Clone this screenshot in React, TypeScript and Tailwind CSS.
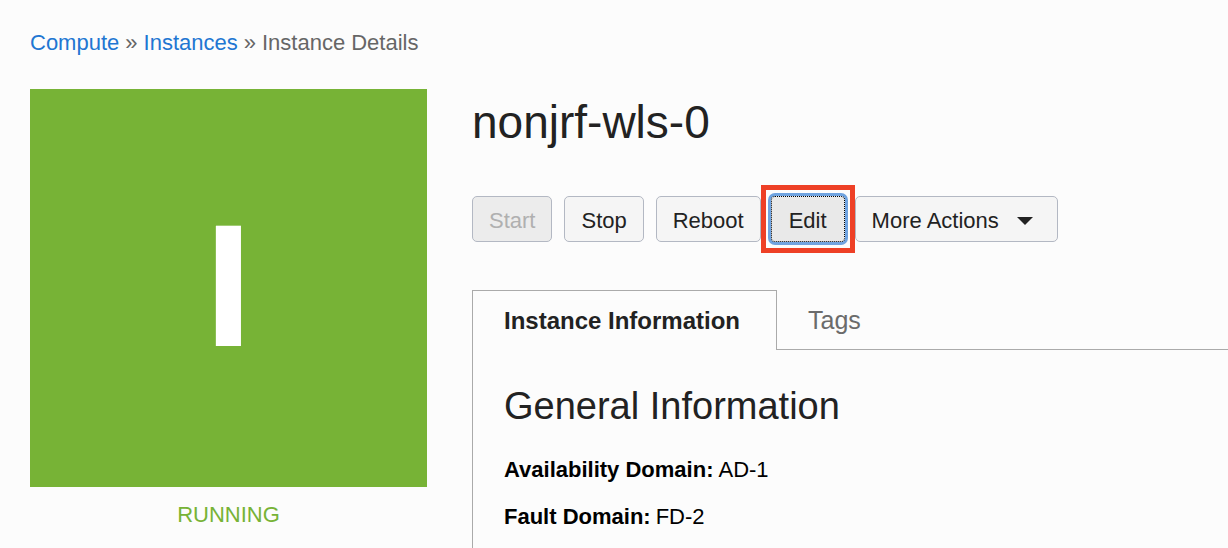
import type { ReactNode } from "react";

const buttonBase = "h-[46px] rounded-[5px] border border-[#b3b8c3] pl-4 pt-[3px] text-[22px] leading-6";

function ActionButton({ children, disabled = false }: { children: ReactNode; disabled?: boolean }) {
  return (
    <button
      type="button"
      disabled={disabled}
      className={`${buttonBase} pr-4 ${disabled ? "bg-[#ececec] text-[#b0b0b0]" : "bg-[#f5f5f5] text-[#222222]"}`}
    >
      {children}
    </button>
  );
}

function Field({ label, value }: { label: string; value: string }) {
  return (
    <div className="flex gap-[5px]">
      <dt className="font-bold">{label}:</dt>
      <dd>{value}</dd>
    </div>
  );
}

export default function App() {
  return (
    <div className="flex min-h-screen flex-col bg-[#fcfcfc] pl-[30px] pt-[30px] font-['Liberation_Sans',Arial,sans-serif] text-[22px] leading-[26px] text-[#222222]">
      <nav aria-label="Breadcrumb" className="flex gap-[6px] text-[#666666]">
        <a href="#compute" className="text-[#2176d2]">Compute</a>
        <span>»</span>
        <a href="#instances" className="text-[#2176d2]">Instances</a>
        <span>»</span>
        <span>Instance Details</span>
      </nav>

      <div className="mt-[33px] flex flex-1 gap-[45px]">
        <aside className="w-[397px] shrink-0 text-center text-[#77b336]">
          <div className="flex h-[398px] items-center justify-center bg-[#77b336] pb-1 text-[174px] font-bold leading-none text-white">
            I
          </div>
          <p className="mt-[15px]">RUNNING</p>
        </aside>

        <main className="flex min-w-0 flex-1 flex-col">
          <h1 className="mt-2 text-[46px] leading-[50px]">nonjrf-wls-0</h1>

          <div className="mt-[49px] flex gap-[10px] whitespace-nowrap">
            <div className="flex gap-3">
              <ActionButton disabled>Start</ActionButton>
              <ActionButton>Stop</ActionButton>
              <ActionButton>Reboot</ActionButton>
            </div>
            <div className="relative">
              <button
                type="button"
                className="h-[46px] rounded-[4px] border border-dotted border-black bg-[#e9e9e9] px-[17px] pt-[3px] leading-6 ring-3 ring-[#6fa3e0]"
              >
                Edit
              </button>
              <span aria-hidden="true" className="pointer-events-none absolute -inset-x-[10px] -inset-y-[11px] border-5 border-[#ee4026]" />
            </div>
            <button type="button" className={`${buttonBase} flex items-center gap-[18px] bg-[#f5f5f5] pr-6`}>
              More Actions
              <svg viewBox="0 0 16 8" className="h-2 w-4" fill="currentColor" aria-hidden="true">
                <path d="M0 0h16L8 8z" />
              </svg>
            </button>
          </div>

          <div role="tablist" className="mt-12 flex text-[25px] leading-[30px]">
            <button type="button" role="tab" aria-selected="true" className="h-[60px] border border-b-0 border-[#aaaaaa] pl-[31px] pr-9 text-[24px] font-bold">
              Instance Information
            </button>
            <div className="flex flex-1 border-b border-[#aaaaaa]">
              <button type="button" role="tab" aria-selected="false" className="px-[31px] text-[#6b6b6b]">
                Tags
              </button>
            </div>
          </div>

          <section role="tabpanel" className="flex-1 border-l border-[#aaaaaa] pl-[31px] pt-[34px]">
            <h2 className="text-[38px] leading-[44px]">General Information</h2>
            <dl className="mt-[29px] flex flex-col gap-[21px] text-black">
              <Field label="Availability Domain" value="AD-1" />
              <Field label="Fault Domain" value="FD-2" />
            </dl>
          </section>
        </main>
      </div>
    </div>
  );
}
